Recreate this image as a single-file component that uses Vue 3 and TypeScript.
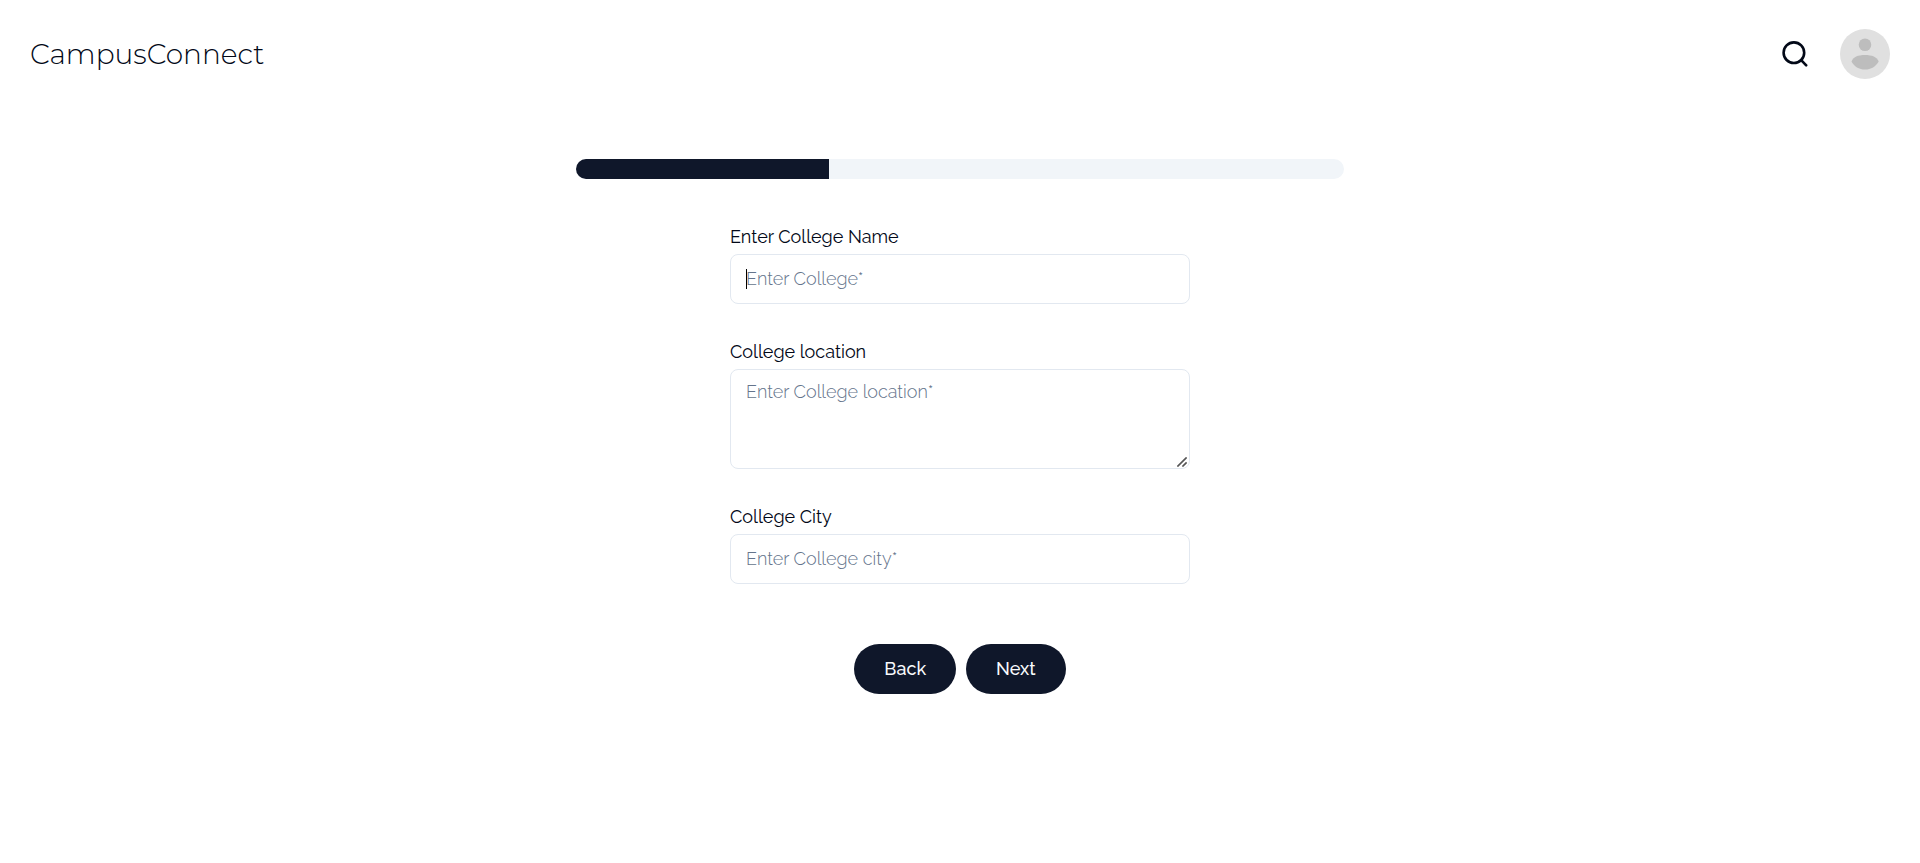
<script setup lang="ts">
import { ref } from 'vue'

interface Field {
  id: string
  label: string
  placeholder: string
  multiline: boolean
  active: boolean
}

const fields: Field[] = [
  { id: 'college-name', label: 'Enter College Name', placeholder: 'Enter College*', multiline: false, active: true },
  { id: 'college-location', label: 'College location', placeholder: 'Enter College location*', multiline: true, active: false },
  { id: 'college-city', label: 'College City', placeholder: 'Enter College city*', multiline: false, active: false },
]

const values = ref<Record<string, string>>({
  'college-name': '',
  'college-location': '',
  'college-city': '',
})
const progress = ref(33)
</script>

<template>
  <div class="page">
    <header class="header">
      <a class="brand" href="#">CampusConnect</a>
      <div class="actions">
        <button class="icon-button" type="button" aria-label="Search">
          <svg class="search" viewBox="0 0 30 30" fill="none" stroke="currentColor" stroke-width="2.6" stroke-linecap="round">
            <circle cx="13.9" cy="13.7" r="10.3" />
            <path d="M21.2 21.1 26.2 26.3" />
          </svg>
        </button>
        <button class="icon-button" type="button" aria-label="Profile">
          <svg class="avatar" viewBox="0 0 50 50">
            <circle cx="25" cy="25" r="25" fill="#e0e0e0" />
            <circle cx="25" cy="15.8" r="6.3" fill="#bdbdbd" />
            <path d="M11.5 32.5C13 28 18 26 25 26s12 2 13.7 6.5C36 37.5 31 40.6 25 40.6S14 37.5 11.5 32.5Z" fill="#bdbdbd" />
          </svg>
        </button>
      </div>
    </header>

    <main class="main">
      <div class="progress" role="progressbar" aria-label="Progress" :aria-valuenow="progress" aria-valuemin="0" aria-valuemax="100">
        <div class="progress-fill" :style="{ width: progress + '%' }"></div>
      </div>

      <form class="form" @submit.prevent>
        <div v-for="field in fields" :key="field.id" class="field">
          <label class="label" :for="field.id">{{ field.label }}</label>
          <div class="control">
            <textarea v-if="field.multiline" :id="field.id" v-model="values[field.id]" class="input area" :placeholder="field.placeholder"></textarea>
            <input v-else :id="field.id" v-model="values[field.id]" class="input" type="text" :placeholder="field.placeholder" />
            <svg v-if="field.multiline" class="grip" viewBox="0 0 10 10" fill="none" stroke="#555" stroke-width="1.6" aria-hidden="true">
              <path d="M0.4 9.6 9.6 0.4M5.4 9.6 9.6 5.4" />
            </svg>
            <span v-if="field.active && !values[field.id]" class="caret" aria-hidden="true"></span>
          </div>
        </div>

        <div class="buttons">
          <button class="button" type="button">Back</button>
          <button class="button" type="submit">Next</button>
        </div>
      </form>
    </main>
  </div>
</template>

<style>
body {
  background: #fff;
}
</style>

<style scoped>
.page {
  color: #020817;
  font-family: Raleway, Lato, sans-serif;
  font-size: 18px;
  line-height: 25px;
}

.page *,
.page *::before {
  box-sizing: border-box;
}

.header {
  display: flex;
  align-items: center;
  justify-content: space-between;
  padding: 29px 30px;
}

.brand {
  color: inherit;
  font-family: Montserrat, Inter, sans-serif;
  font-size: 28px;
  font-weight: 350;
  line-height: 40px;
  text-decoration: none;
}

.actions {
  display: flex;
  align-items: center;
  gap: 30px;
}

.icon-button {
  display: block;
  padding: 0;
  border: 0;
  background: none;
  color: inherit;
  cursor: pointer;
}

.search {
  display: block;
  width: 30px;
  height: 30px;
}

.avatar {
  display: block;
  width: 50px;
  height: 50px;
}

.main {
  display: flex;
  flex-direction: column;
  align-items: center;
  padding: 51px 20px 40px;
}

.progress {
  width: 40vw;
  height: 20px;
  overflow: hidden;
  border-radius: 10px;
  background: #f1f5f9;
}

.progress-fill {
  height: 100%;
  background: #0f172a;
}

.form {
  display: flex;
  flex-direction: column;
  gap: 35px;
  width: 100%;
  max-width: 460px;
  margin-top: 45px;
}

.field {
  display: flex;
  flex-direction: column;
  gap: 5px;
}

.label {
  align-self: flex-start;
}

.control {
  position: relative;
}

.input {
  display: block;
  width: 100%;
  height: 50px;
  padding: 9px 15px 11px;
  border: 1px solid #e2e8f0;
  border-radius: 8px;
  outline: none;
  background: #fff;
  color: inherit;
  font: inherit;
  font-weight: 350;
}

.input::placeholder {
  color: #64748b;
  opacity: 1;
}

.area {
  height: 100px;
  resize: vertical;
}

.area::-webkit-resizer {
  background: transparent;
}

.grip {
  position: absolute;
  right: 3px;
  bottom: 2px;
  width: 10px;
  height: 10px;
  pointer-events: none;
}

.caret {
  position: absolute;
  top: 15px;
  left: 16px;
  width: 1px;
  height: 20px;
  background: #000;
}

.buttons {
  display: flex;
  justify-content: center;
  gap: 10px;
  margin-top: 25px;
}

.button {
  height: 50px;
  padding: 0 30px 2px;
  border: 0;
  border-radius: 25px;
  background: #0f172a;
  color: #f8fafc;
  font: inherit;
  font-weight: 500;
  cursor: pointer;
}
</style>
